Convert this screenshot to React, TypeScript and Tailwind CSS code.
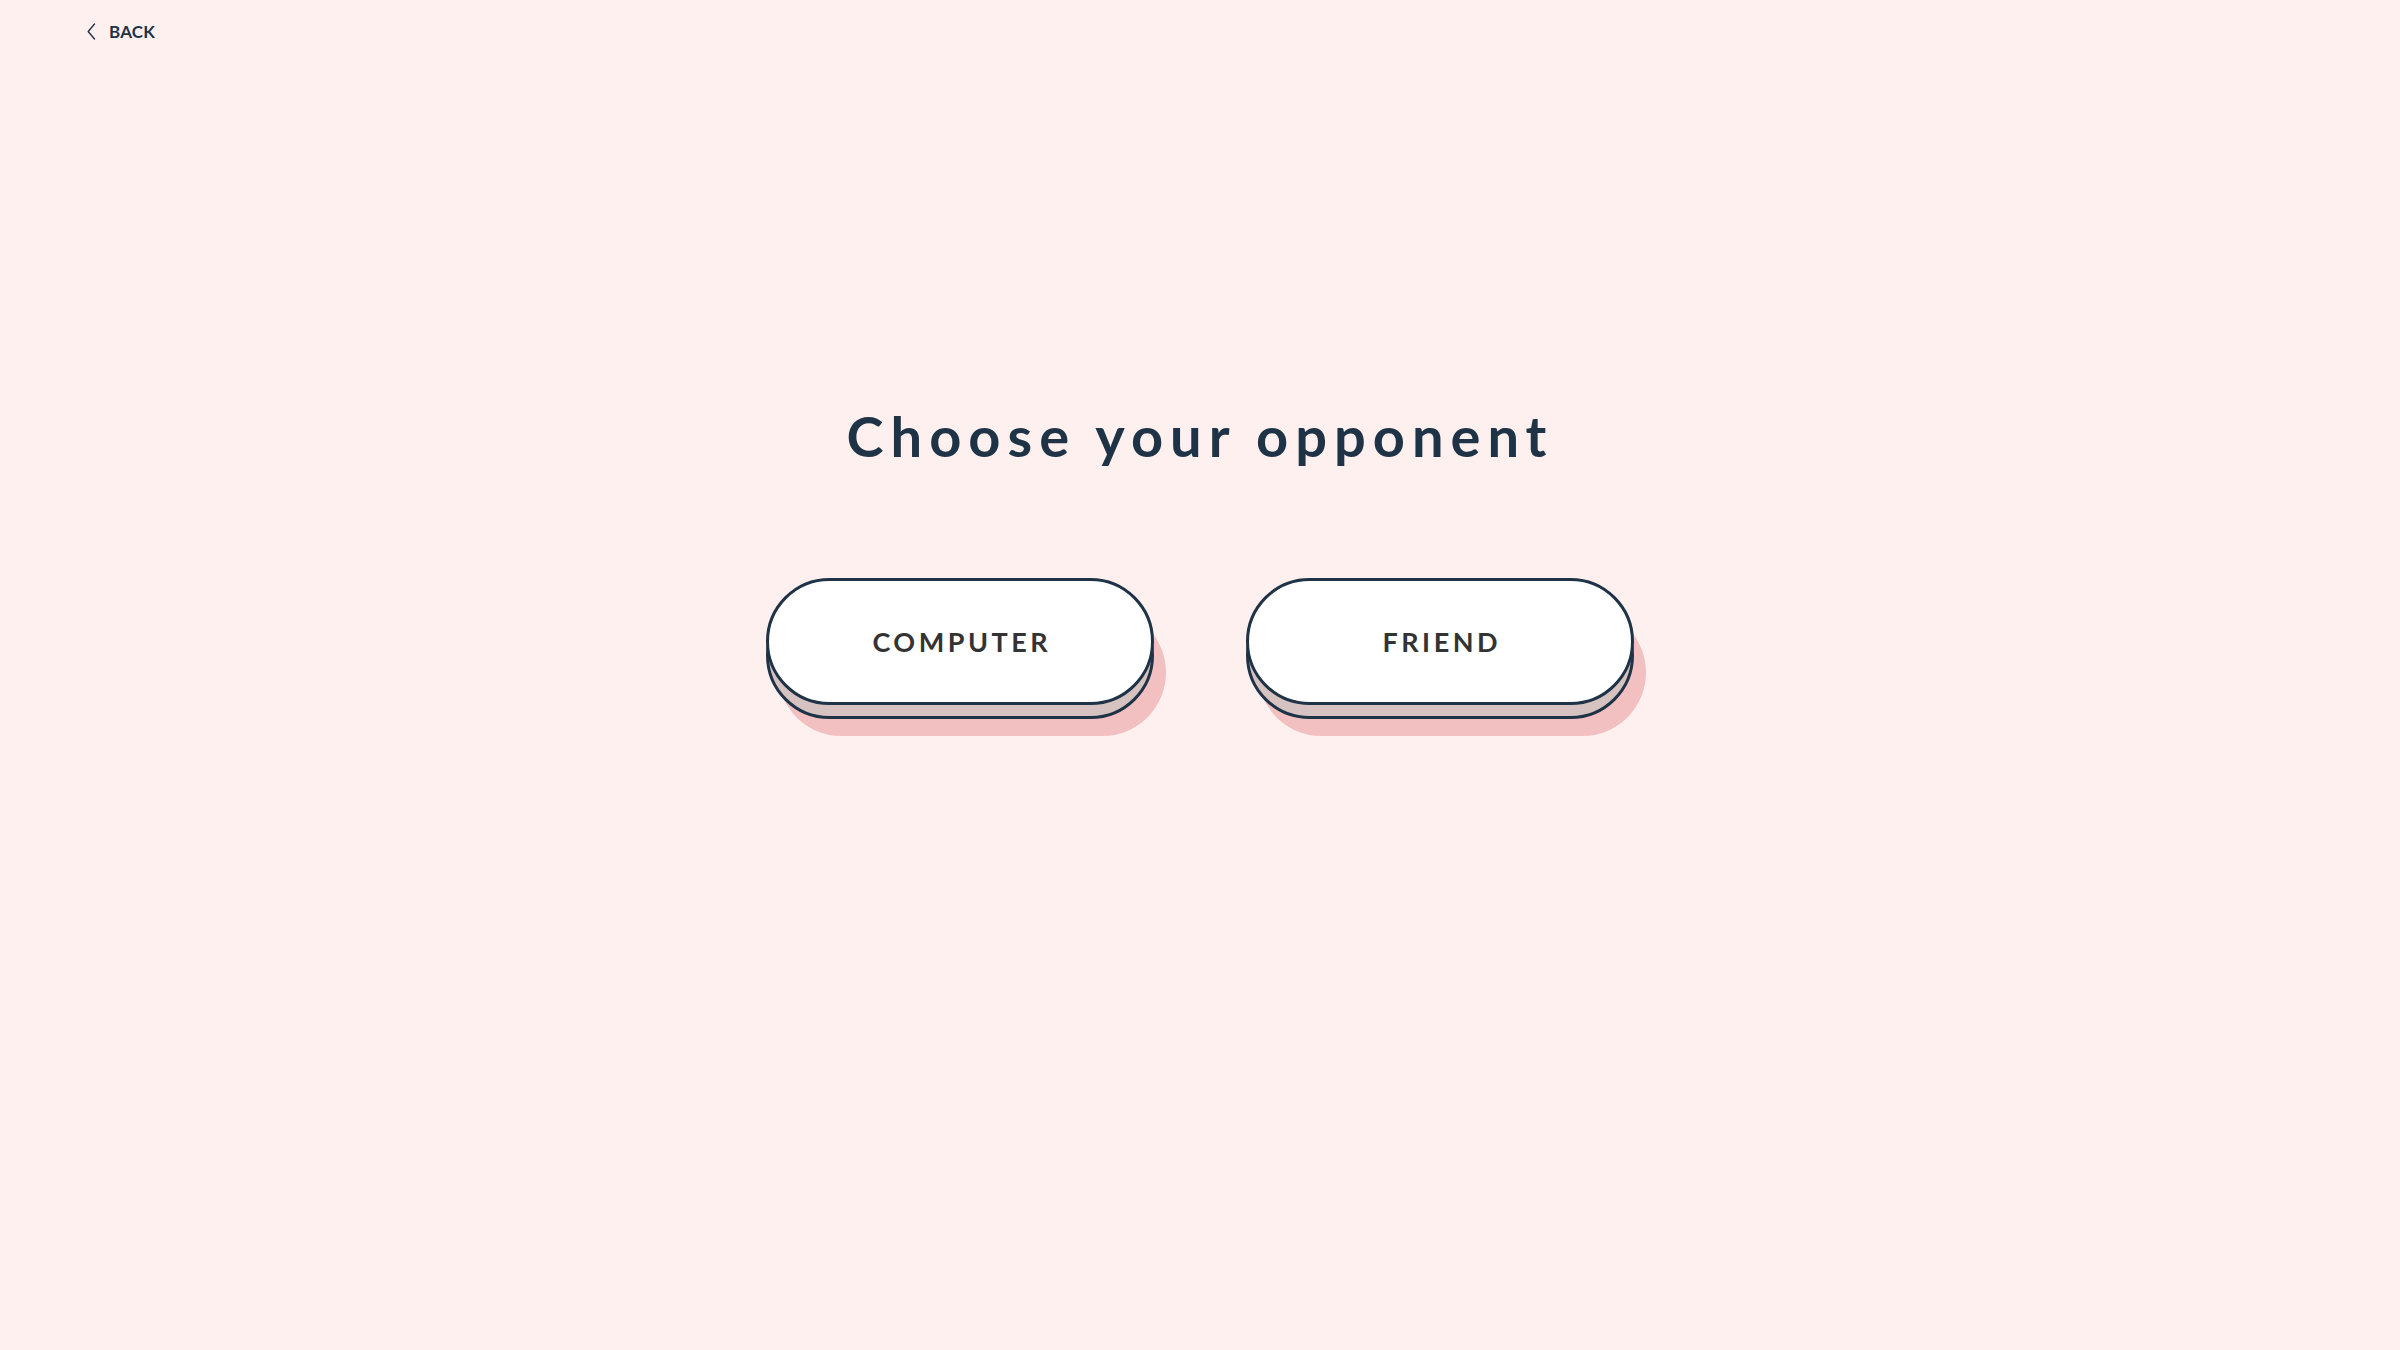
import React from 'react'

const OpponentButton: React.FC<{ label: string }> = ({ label }) => {
  return (
    <button className="relative w-[400px] h-[158px] cursor-pointer">
      {/* soft pink shadow */}
      <div className="absolute left-[12px] top-[31px] w-[388px] h-[127px] rounded-full bg-[#f2c0c0]" />
      {/* bottom edge of the pill */}
      <div className="absolute left-0 top-[14px] w-[388px] h-[127px] rounded-full bg-[#d7c2c2] border-[3px] border-[#1f3347]" />
      {/* face */}
      <div className="absolute left-0 top-0 w-[388px] h-[127px] rounded-full bg-white border-[3px] border-[#1f3347] flex items-center justify-center">
        <span className="font-['Lato',sans-serif] font-bold text-[27px] leading-none tracking-[0.13em] text-[#333333] pl-[0.13em]">
          {label}
        </span>
      </div>
    </button>
  )
}

export default function App() {
  return (
    <div className="min-h-screen w-full bg-[#fff0f0] font-['Lato',sans-serif] flex flex-col">
      <div className="pt-[23px] pl-[87px]">
        <a className="flex items-center gap-[13px] text-[#1e3246] cursor-pointer">
          <svg width="9" height="17" viewBox="0 0 9 17" fill="none">
            <path d="M7.5 1 L1.2 8.5 L7.5 16" stroke="#1e3246" strokeWidth="1.4" strokeLinecap="round" strokeLinejoin="round" />
          </svg>
          <span className="text-[17px] leading-none font-bold tracking-[0.01em]">BACK</span>
        </a>
      </div>

      <h1 className="mt-[368px] text-center text-[56px] leading-none font-bold tracking-[0.125em] text-[#1f3347]">
        Choose your opponent
      </h1>

      <div className="mt-[114px] flex justify-center gap-[80px] pl-[12px]">
        <OpponentButton label="COMPUTER" />
        <OpponentButton label="FRIEND" />
      </div>
    </div>
  )
}
